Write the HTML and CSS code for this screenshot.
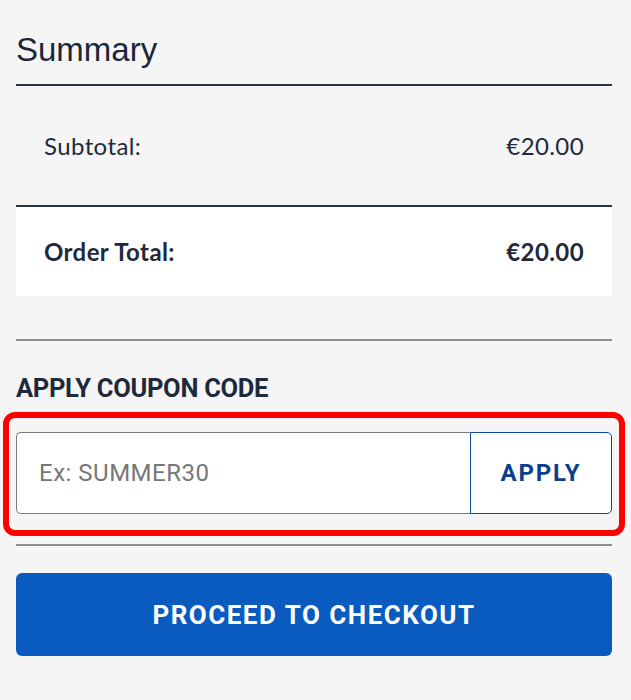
FILE: index.html
```html
<!DOCTYPE html>
<html lang="en">
<head>
    <meta charset="UTF-8">
    <meta name="viewport" content="width=device-width, initial-scale=1.0">
    <title>Cart Summary</title>
    <link rel="stylesheet" href="styles.css">
</head>
<body>

<section class="summary">
    <h1 class="summary-title">Summary</h1>

    <div class="totals-row subtotal">
        <span>Subtotal:</span>
        <span>€20.00</span>
    </div>
    <div class="totals-row order-total">
        <span>Order Total:</span>
        <span>€20.00</span>
    </div>

    <hr class="divider first">

    <h2 class="coupon-label">APPLY COUPON CODE</h2>

    <!-- coupon form, highlighted -->
    <div class="coupon-frame">
        <form class="coupon-form">
            <input type="text" class="coupon-input" placeholder="Ex: SUMMER30">
            <button type="button" class="apply-btn">APPLY</button>
        </form>
    </div>

    <hr class="divider second">

    <button type="button" class="checkout-btn">PROCEED TO CHECKOUT</button>
</section>

</body>
</html>
```

FILE: styles.css
```css
body {
    margin: 0;
    background-color: #f5f5f5;
    color: #1e2a3b;
    font-family: Lato, "Liberation Sans", sans-serif;
}

.summary {
    width: 596px;
    margin-left: 16px;
}

.summary-title {
    margin: 31px 0 0 0;
    padding-bottom: 15px;
    font-family: "Liberation Sans", Arial, sans-serif;
    font-size: 33px;
    font-weight: 400;
    line-height: 38px;
    color: #1b2738;
    border-bottom: 2px solid #2a3444;
}

.totals-row {
    display: flex;
    justify-content: space-between;
    align-items: center;
    padding: 0 28px;
    font-size: 24px;
    letter-spacing: 0.4px;
}

.subtotal {
    height: 119px;
    border-bottom: 2px solid #2a3444;
}

.order-total {
    height: 89px;
    background-color: #ffffff;
    font-weight: 700;
}

.divider {
    margin: 0;
    border: none;
    border-top: 2px solid #8f8f8f;
}

.divider.first {
    margin-top: 43px;
}

.divider.second {
    margin-top: 8px;
}

.coupon-label {
    margin: 33px 0 10px 0;
    font-family: Roboto, "Liberation Sans", sans-serif;
    font-size: 25.5px;
    font-weight: 700;
    line-height: 28px;
    letter-spacing: -0.3px;
}

.coupon-frame {
    margin: 0 -13px;
    padding: 14px 7px 16px 7px;
    border: 6px solid #ff0000;
    border-radius: 12px;
}

.coupon-form {
    display: flex;
    height: 82px;
    margin: 0;
}

.coupon-input {
    flex: 1;
    min-width: 0;
    padding: 0 22px;
    border: 1px solid #7a7a7a;
    border-right: none;
    border-radius: 5px 0 0 5px;
    background-color: #ffffff;
    font-family: Roboto, "Liberation Sans", sans-serif;
    font-size: 24px;
    letter-spacing: 0.5px;
    color: #1e2a3b;
    outline: none;
}

.coupon-input::placeholder {
    color: #777777;
}

.apply-btn {
    width: 142px;
    border: 1px solid #0b4a9c;
    border-radius: 0 5px 5px 0;
    background-color: #ffffff;
    color: #0b3f8e;
    font-family: Roboto, "Liberation Sans", sans-serif;
    font-size: 24px;
    font-weight: 700;
    letter-spacing: 1.8px;
    cursor: pointer;
}

.checkout-btn {
    display: block;
    width: 100%;
    height: 83px;
    margin-top: 27px;
    border: none;
    border-radius: 6px;
    background-color: #0a5bbf;
    color: #ffffff;
    font-family: Roboto, "Liberation Sans", sans-serif;
    font-size: 26px;
    font-weight: 700;
    letter-spacing: 1.5px;
    cursor: pointer;
}

.checkout-btn:hover {
    background-color: #084fa6;
}
```
